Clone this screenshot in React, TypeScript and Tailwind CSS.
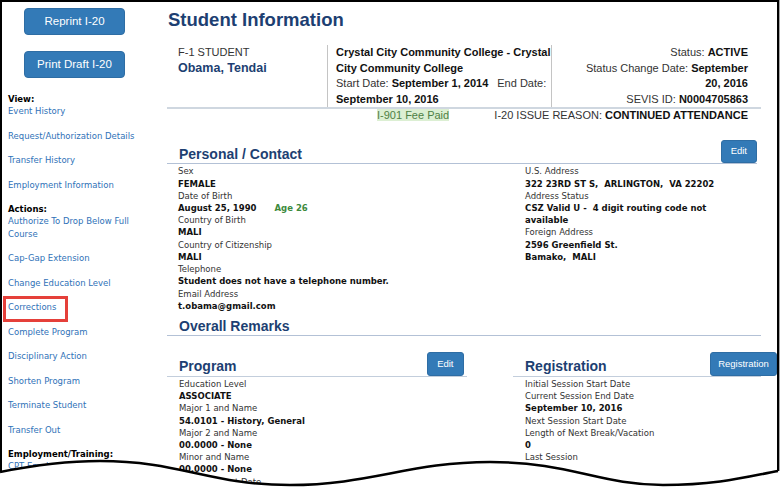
import React from 'react';

const viewLinks = ['Event History', 'Request/Authorization Details', 'Transfer History', 'Employment Information'];
const actionLinks = [
  'Authorize To Drop Below Full Course',
  'Cap-Gap Extension',
  'Change Education Level',
  'Corrections',
  'Complete Program',
  'Disciplinary Action',
  'Shorten Program',
  'Terminate Student',
  'Transfer Out',
];

type Field = { label: string; value?: React.ReactNode };

const personalLeft: Field[] = [
  { label: 'Sex', value: 'FEMALE' },
  {
    label: 'Date of Birth',
    value: (
      <>
        August 25, 1990<span className="ml-[18px] text-[#3d8a3d]">Age 26</span>
      </>
    ),
  },
  { label: 'Country of Birth', value: 'MALI' },
  { label: 'Country of Citizenship', value: 'MALI' },
  { label: 'Telephone', value: 'Student does not have a telephone number.' },
  { label: 'Email Address', value: 't.obama@gmail.com' },
];

const personalRight: Field[] = [
  { label: 'U.S. Address', value: '322 23RD ST S,  ARLINGTON,  VA 22202' },
  {
    label: 'Address Status',
    value: (
      <>
        CSZ Valid U -  4 digit routing code not
        <br />
        available
      </>
    ),
  },
  {
    label: 'Foreign Address',
    value: (
      <>
        2596 Greenfield St.
        <br />
        Bamako,  MALI
      </>
    ),
  },
];

const program: Field[] = [
  { label: 'Education Level', value: 'ASSOCIATE' },
  { label: 'Major 1 and Name', value: '54.0101 - History, General' },
  { label: 'Major 2 and Name', value: '00.0000 - None' },
  { label: 'Minor and Name', value: '00.0000 - None' },
  { label: 'Program Start Date' },
];

const registration: Field[] = [
  { label: 'Initial Session Start Date' },
  { label: 'Current Session End Date', value: 'September 10, 2016' },
  { label: 'Next Session Start Date' },
  { label: 'Length of Next Break/Vacation', value: '0' },
  { label: 'Last Session' },
];

const FieldList = ({ fields }: { fields: Field[] }) => (
  <div>
    {fields.map((f) => (
      <div key={f.label}>
        <div className="text-[#333]">{f.label}</div>
        {f.value !== undefined && <div className="font-bold text-[#111] whitespace-pre-wrap">{f.value}</div>}
      </div>
    ))}
  </div>
);

const SmallButton = ({ children }: { children: React.ReactNode }) => (
  <button className="h-[23px] px-[9px] rounded-[3px] bg-[#337ab7] border border-[#2e6da4] text-white text-[9.5px] font-['Liberation_Sans',Arial,sans-serif]">
    {children}
  </button>
);

const SectionHeader = ({ title, action }: { title: string; action?: React.ReactNode }) => (
  <div className="flex items-end justify-between border-b border-[#b3c1d6] pl-[12px]">
    <h3 className="text-[14px] leading-[16px] font-bold text-[#1d3f72] font-['Liberation_Sans',Arial,sans-serif] mb-[1px]">
      {title}
    </h3>
    {action}
  </div>
);

export default function App() {
  return (
    <div className="relative w-[780px] h-[490px] bg-white overflow-hidden">
      <div className="flex w-[779px] h-[490px] border-2 border-b-0 border-black shadow-[1px_0_1px_rgba(0,0,0,0.35)] overflow-hidden">
        {/* sidebar */}
        <aside className="w-[165px] shrink-0">
          <div className="pl-[22px] pt-[6px]">
            <button className="block w-[101px] h-[27px] rounded-[4px] bg-[#337ab7] border border-[#2e6da4] text-white text-[11.5px] font-['Liberation_Sans',Arial,sans-serif]">
              Reprint I-20
            </button>
            <button className="block mt-[16px] w-[101px] h-[27px] rounded-[4px] bg-[#337ab7] border border-[#2e6da4] text-white text-[11.5px] font-['Liberation_Sans',Arial,sans-serif]">
              Print Draft I-20
            </button>
          </div>
          <nav className="mt-[15px] pl-[6px] pr-[14px] text-[8.5px] leading-[12.2px] font-['DejaVu_Sans',Verdana,sans-serif]">
            <div className="font-bold text-black">View:</div>
            {viewLinks.map((l) => (
              <div key={l} className="mb-[12.3px] text-[#2f72b8]">{l}</div>
            ))}
            <div className="font-bold text-black">Actions:</div>
            {actionLinks.map((l) => (
              <div key={l} className="mb-[12.3px] text-[#2f72b8]">
                <span className="relative">
                  {l}
                  {l === 'Corrections' && (
                    <span className="absolute left-[-5px] top-[-6.5px] w-[65px] h-[26px] border-[3px] border-[#e5403a]" />
                  )}
                </span>
              </div>
            ))}
            <div className="font-bold text-black">Employment/Training:</div>
            <div className="text-[#2f72b8]">CPT Employment</div>
          </nav>
        </aside>

        {/* main */}
        <main className="w-[594px] shrink-0">
          <h1 className="mt-[7px] pl-[1px] text-[18.5px] leading-[22px] font-bold text-[#1d3f72] font-['Liberation_Sans',Arial,sans-serif]">
            Student Information
          </h1>

          <div className="font-['Liberation_Sans',Arial,sans-serif] text-[11px] text-[#333]">
            <div className="mt-[14px] flex leading-[15.6px] border-b-2 border-[#cfd7e0]">
              <div className="w-[160px] pl-[11px]">
                <div>F-1 STUDENT</div>
                <div className="text-[12.5px] font-bold text-[#1d3f72]">Obama, Tendai</div>
              </div>
              <div className="w-[224px] border-l border-[#c4c4c4] pl-[8px]">
                <div className="font-bold text-[#111]">
                  Crystal City Community College - Crystal
                  <br />
                  City Community College
                </div>
                <div>
                  Start Date: <b className="text-[#111]">September 1, 2014</b>
                  <span className="ml-[9px]">End Date:</span>
                </div>
                <div className="font-bold text-[#111]">September 10, 2016</div>
              </div>
              <div className="flex-1 border-l border-[#c4c4c4] pr-[13px] text-right">
                <div>
                  Status: <b className="text-[#111]">ACTIVE</b>
                </div>
                <div>
                  Status Change Date: <b className="text-[#111]">September</b>
                  <br />
                  <b className="text-[#111]">20, 2016</b>
                </div>
                <div>
                  SEVIS ID: <b className="text-[#111]">N0004705863</b>
                </div>
              </div>
            </div>

            <div className="flex leading-[12px]">
              <span className="ml-[210px] bg-[#dcefd3] text-[#4f7f45]">I-901 Fee Paid</span>
              <span className="ml-auto pr-[13px]">
                I-20 ISSUE REASON: <b className="text-[#111]">CONTINUED ATTENDANCE</b>
              </span>
            </div>
          </div>

          {/* personal */}
          <div className="mt-[18.6px] pr-[4px]">
            <SectionHeader title="Personal / Contact" action={<SmallButton>Edit</SmallButton>} />
          </div>
          <div className="grid grid-cols-[346px_1fr] pt-[1.5px] text-[8.5px] leading-[12.2px] font-['DejaVu_Sans',Verdana,sans-serif]">
            <div className="pl-[11px]">
              <FieldList fields={personalLeft} />
            </div>
            <div className="pl-[12px]">
              <FieldList fields={personalRight} />
            </div>
          </div>

          <div className="mt-[5.8px]">
            <SectionHeader title="Overall Remarks" />
          </div>

          <div className="mt-[16.2px] flex">
            <div className="w-[300px]">
              <div className="flex items-end justify-between border-b border-[#c3cedc] pl-[12px] pr-[3.5px]">
                <h3 className="mb-[2px] text-[14px] leading-[16px] font-bold text-[#1d3f72] font-['Liberation_Sans',Arial,sans-serif]">
                  Program
                </h3>
                <button className="h-[24px] px-[9px] rounded-[3px] bg-[#337ab7] border border-[#2e6da4] text-white text-[9.5px] font-['Liberation_Sans',Arial,sans-serif]">
                  Edit
                </button>
              </div>
              <div className="pl-[12px] pt-[1px] text-[8.5px] leading-[12.2px] font-['DejaVu_Sans',Verdana,sans-serif]">
                <FieldList fields={program} />
              </div>
            </div>
            <div className="ml-[46px] w-[248px]">
              <div className="flex items-end justify-between border-b border-[#c3cedc] pl-[12px]">
                <h3 className="mb-[2px] text-[14px] leading-[16px] font-bold text-[#1d3f72] font-['Liberation_Sans',Arial,sans-serif]">
                  Registration
                </h3>
                <button className="mr-[-16px] h-[24px] w-[67px] rounded-[3px] bg-[#337ab7] border border-[#2e6da4] text-white text-[9.5px] font-['Liberation_Sans',Arial,sans-serif]">
                  Registration
                </button>
              </div>
              <div className="pl-[12px] pt-[1px] text-[8.5px] leading-[12.2px] font-['DejaVu_Sans',Verdana,sans-serif]">
                <FieldList fields={registration} />
              </div>
            </div>
          </div>
        </main>
      </div>

      {/* torn bottom edge */}
      <svg className="absolute left-0 top-[450px]" width="780" height="40" viewBox="0 0 780 40">
        <path
          d="M0,22 C35,15 65,11 100,11 C180,11 210,35 290,35 C370,35 410,12 490,12 C570,12 600,35 663,35 C720,35 750,26 778,21 L780,21 L780,40 L0,40 Z"
          fill="#fff"
        />
        <path
          d="M0,22 C35,15 65,11 100,11 C180,11 210,35 290,35 C370,35 410,12 490,12 C570,12 600,35 663,35 C720,35 750,26 778,21"
          fill="none"
          stroke="#000"
          strokeWidth="2.5"
        />
      </svg>
    </div>
  );
}
